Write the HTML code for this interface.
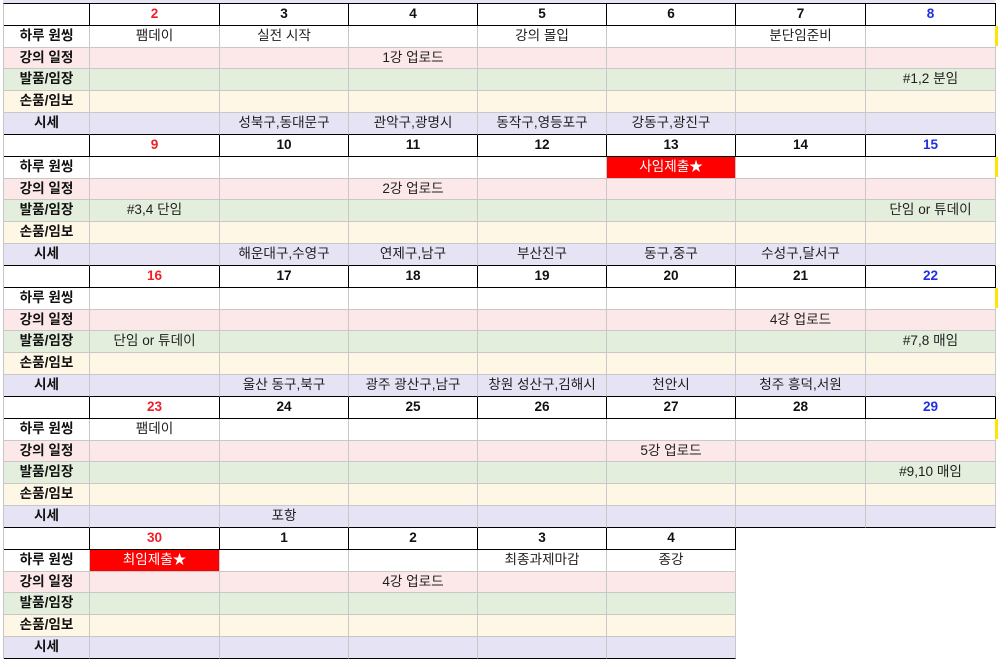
<!DOCTYPE html>
<html><head><meta charset="utf-8">
<style>
body{margin:0;width:998px;height:663px;background:#fff;position:relative;overflow:hidden;font-family:"Liberation Sans","Noto Sans CJK KR",sans-serif;}
.top{position:absolute;left:3px;top:0;width:992px;height:3px;background:#e6e3f5;}
.g{position:absolute;left:3px;top:3px;display:grid;grid-template-columns:86px 130px 129px 129px 129px 129px 130px 130px;grid-template-rows:repeat(30,21.83px);border-left:1px solid #c6c6c6;border-top:1px solid #000;}
.g>div{box-sizing:border-box;border-right:1px solid #c8c8c8;border-bottom:1px solid #c8c8c8;font-size:13.6px;color:#1e1e1e;text-align:center;line-height:20px;white-space:nowrap;overflow:hidden}
.g>div.l{font-weight:bold;color:#111}
.g>div.h{background:#fff;font-weight:bold;color:#111;border-bottom:1px solid #000;border-right:1px solid #000}
.g>div.hr{color:#f0202a}.g>div.hb{color:#2030e0}
.g>div.w{background:#fff}
.g>div.p{background:#fce8e9}
.g>div.n{background:#e3efdc}
.g>div.y{background:#fff7e6}
.g>div.v{background:#e6e3f5;border-bottom:1px solid #000}
.g>div.r{background:#ff0000;color:#fff}
.g>div.x{background:transparent;border:none}
.ys{position:absolute;left:995px;width:3px;height:20px;background:#ffe600}
</style></head><body>
<div class="top"></div>
<div class="g">
<div class="h"></div><div class="h hr">2</div><div class="h">3</div><div class="h">4</div><div class="h">5</div><div class="h">6</div><div class="h">7</div><div class="h hb">8</div>
<div class="w l">하루 원씽</div><div class="w">팸데이</div><div class="w">실전 시작</div><div class="w"></div><div class="w">강의 몰입</div><div class="w"></div><div class="w">분단임준비</div><div class="w"></div>
<div class="p l">강의 일정</div><div class="p"></div><div class="p"></div><div class="p">1강 업로드</div><div class="p"></div><div class="p"></div><div class="p"></div><div class="p"></div>
<div class="n l">발품/임장</div><div class="n"></div><div class="n"></div><div class="n"></div><div class="n"></div><div class="n"></div><div class="n"></div><div class="n">#1,2 분임</div>
<div class="y l">손품/임보</div><div class="y"></div><div class="y"></div><div class="y"></div><div class="y"></div><div class="y"></div><div class="y"></div><div class="y"></div>
<div class="v l">시세</div><div class="v"></div><div class="v">성북구,동대문구</div><div class="v">관악구,광명시</div><div class="v">동작구,영등포구</div><div class="v">강동구,광진구</div><div class="v"></div><div class="v"></div>

<div class="h"></div><div class="h hr">9</div><div class="h">10</div><div class="h">11</div><div class="h">12</div><div class="h">13</div><div class="h">14</div><div class="h hb">15</div>
<div class="w l">하루 원씽</div><div class="w"></div><div class="w"></div><div class="w"></div><div class="w"></div><div class="r">사임제출★</div><div class="w"></div><div class="w"></div>
<div class="p l">강의 일정</div><div class="p"></div><div class="p"></div><div class="p">2강 업로드</div><div class="p"></div><div class="p"></div><div class="p"></div><div class="p"></div>
<div class="n l">발품/임장</div><div class="n">#3,4 단임</div><div class="n"></div><div class="n"></div><div class="n"></div><div class="n"></div><div class="n"></div><div class="n">단임 or 튜데이</div>
<div class="y l">손품/임보</div><div class="y"></div><div class="y"></div><div class="y"></div><div class="y"></div><div class="y"></div><div class="y"></div><div class="y"></div>
<div class="v l">시세</div><div class="v"></div><div class="v">해운대구,수영구</div><div class="v">연제구,남구</div><div class="v">부산진구</div><div class="v">동구,중구</div><div class="v">수성구,달서구</div><div class="v"></div>

<div class="h"></div><div class="h hr">16</div><div class="h">17</div><div class="h">18</div><div class="h">19</div><div class="h">20</div><div class="h">21</div><div class="h hb">22</div>
<div class="w l">하루 원씽</div><div class="w"></div><div class="w"></div><div class="w"></div><div class="w"></div><div class="w"></div><div class="w"></div><div class="w"></div>
<div class="p l">강의 일정</div><div class="p"></div><div class="p"></div><div class="p"></div><div class="p"></div><div class="p"></div><div class="p">4강 업로드</div><div class="p"></div>
<div class="n l">발품/임장</div><div class="n">단임 or 튜데이</div><div class="n"></div><div class="n"></div><div class="n"></div><div class="n"></div><div class="n"></div><div class="n">#7,8 매임</div>
<div class="y l">손품/임보</div><div class="y"></div><div class="y"></div><div class="y"></div><div class="y"></div><div class="y"></div><div class="y"></div><div class="y"></div>
<div class="v l">시세</div><div class="v"></div><div class="v">울산 동구,북구</div><div class="v">광주 광산구,남구</div><div class="v">창원 성산구,김해시</div><div class="v">천안시</div><div class="v">청주 흥덕,서원</div><div class="v"></div>

<div class="h"></div><div class="h hr">23</div><div class="h">24</div><div class="h">25</div><div class="h">26</div><div class="h">27</div><div class="h">28</div><div class="h hb">29</div>
<div class="w l">하루 원씽</div><div class="w">팸데이</div><div class="w"></div><div class="w"></div><div class="w"></div><div class="w"></div><div class="w"></div><div class="w"></div>
<div class="p l">강의 일정</div><div class="p"></div><div class="p"></div><div class="p"></div><div class="p"></div><div class="p">5강 업로드</div><div class="p"></div><div class="p"></div>
<div class="n l">발품/임장</div><div class="n"></div><div class="n"></div><div class="n"></div><div class="n"></div><div class="n"></div><div class="n"></div><div class="n">#9,10 매임</div>
<div class="y l">손품/임보</div><div class="y"></div><div class="y"></div><div class="y"></div><div class="y"></div><div class="y"></div><div class="y"></div><div class="y"></div>
<div class="v l">시세</div><div class="v"></div><div class="v">포항</div><div class="v"></div><div class="v"></div><div class="v"></div><div class="v"></div><div class="v"></div>

<div class="h"></div><div class="h hr">30</div><div class="h">1</div><div class="h">2</div><div class="h">3</div><div class="h">4</div><div class="x"></div><div class="x"></div>
<div class="w l">하루 원씽</div><div class="r">최임제출★</div><div class="w"></div><div class="w"></div><div class="w">최종과제마감</div><div class="w">종강</div><div class="x"></div><div class="x"></div>
<div class="p l">강의 일정</div><div class="p"></div><div class="p"></div><div class="p">4강 업로드</div><div class="p"></div><div class="p"></div><div class="x"></div><div class="x"></div>
<div class="n l">발품/임장</div><div class="n"></div><div class="n"></div><div class="n"></div><div class="n"></div><div class="n"></div><div class="x"></div><div class="x"></div>
<div class="y l">손품/임보</div><div class="y"></div><div class="y"></div><div class="y"></div><div class="y"></div><div class="y"></div><div class="x"></div><div class="x"></div>
<div class="v l">시세</div><div class="v"></div><div class="v"></div><div class="v"></div><div class="v"></div><div class="v"></div><div class="x"></div><div class="x"></div>
</div>
<div class="ys" style="top:26px"></div>
<div class="ys" style="top:157px"></div>
<div class="ys" style="top:288px"></div>
<div class="ys" style="top:419px"></div>
</body></html>
